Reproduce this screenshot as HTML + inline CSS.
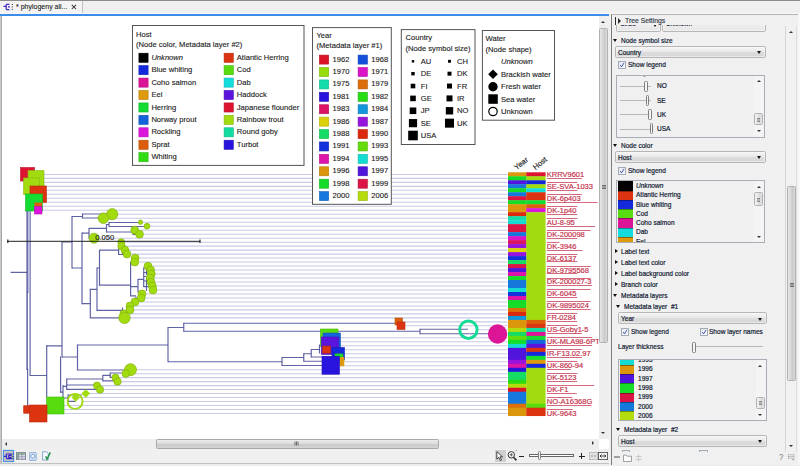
<!DOCTYPE html>
<html><head><meta charset="utf-8"><title>phylogeny alignment</title>
<style>
html,body{margin:0;padding:0;background:#f0f0f0;}
body{width:800px;height:466px;overflow:hidden;position:relative;font-family:"Liberation Sans",Arial,sans-serif;}
.a{position:absolute;}
#cv{position:absolute;left:0;top:0;width:800px;height:466px;}
#cv text{font-family:"Liberation Sans",Arial,sans-serif;}
.t{position:absolute;white-space:nowrap;font-size:7.4px;line-height:9px;color:#0f1830;-webkit-text-stroke:.2px #0f1830;transform:scaleX(.885);transform-origin:0 50%;}
.dd{position:absolute;height:10.3px;border:1px solid #b6b6b6;border-radius:1.8px;background:linear-gradient(#f5f5f5,#e8e8e8 48%,#dddddd 52%,#d5d5d5);box-shadow:0 0 0 .5px #fafafa inset;}
.dd i{position:absolute;right:3.4px;top:4.4px;width:0;height:0;border-left:2.6px solid transparent;border-right:2.6px solid transparent;border-top:3px solid #161616;}
.cb{position:absolute;width:6.2px;height:6.2px;border:.9px solid #a2abb8;background:linear-gradient(135deg,#e3e6ea,#fcfcfd);}
.cb svg{position:absolute;left:0;top:0;}
.tri-d{position:absolute;width:0;height:0;border-left:2.8px solid transparent;border-right:2.8px solid transparent;border-top:3.2px solid #111;}
.tri-r{position:absolute;width:0;height:0;border-top:2.8px solid transparent;border-bottom:2.8px solid transparent;border-left:3.2px solid #111;}
.lb{position:absolute;border:1px solid #a9aeb6;background:#f0f0f0;overflow:hidden;}
.sw{position:absolute;height:9.3px;border-top:.6px solid rgba(0,0,0,.35);box-sizing:border-box;}
.sbv{position:absolute;width:10px;background:#f0f0f0;}
.thumbv{position:absolute;left:.5px;width:9px;border:.8px solid #b2b2b2;border-radius:1.5px;box-sizing:border-box;background:linear-gradient(90deg,#e6e6e6,#d6d6d6 45%,#c8c8c8 60%,#dadada);}
.thumbh{position:absolute;border:.8px solid #a8a8a8;border-radius:1.5px;box-sizing:border-box;background:linear-gradient(#ececec,#dcdcdc 45%,#cacaca 58%,#d4d4d4);}
.au{position:absolute;width:0;height:0;border-left:2.4px solid transparent;border-right:2.4px solid transparent;border-bottom:2.8px solid #333;}
.ad{position:absolute;width:0;height:0;border-left:2.4px solid transparent;border-right:2.4px solid transparent;border-top:2.8px solid #333;}
.al{position:absolute;width:0;height:0;border-top:2.4px solid transparent;border-bottom:2.4px solid transparent;border-right:2.8px solid #333;}
.ar{position:absolute;width:0;height:0;border-top:2.4px solid transparent;border-bottom:2.4px solid transparent;border-left:2.8px solid #333;}
.grip{position:absolute;width:4px;height:0;border-top:.7px solid #6e6e6e;box-shadow:0 1.5px 0 #6e6e6e,0 3px 0 #6e6e6e;}
.trk{position:absolute;height:0;border-top:.8px solid #b9b9b9;}
.knob{position:absolute;width:1.5px;height:9px;border:.8px solid #7d7d7d;border-radius:1.4px;background:#f6f6f6;}
</style></head>
<body>
<!-- top frame -->
<div class="a" style="left:0;top:0;width:800px;height:1.3px;background:#8c8c8c"></div>
<div class="a" style="left:0;top:1.3px;width:800px;height:13px;background:#f0f0f0"></div>
<!-- tab -->
<div class="a" style="left:0;top:1.3px;width:83.2px;height:12.2px;background:#f4f4f4;border-right:1px solid #c2c2c2;box-sizing:border-box"></div><div class="a" style="left:0;top:12.6px;width:800px;height:1.6px;background:#f8f8f8"></div>
<svg class="a" style="left:3px;top:3px" width="11" height="9" viewBox="0 0 11 9">
 <path d="M0.5 3.3H3.2 M3.2 1.4V6.6 M3.2 1.4H6.4 M3.2 6.6H6.4 M5 3.9H7" fill="none" stroke="#3a28c8" stroke-width="1.25"/>
 <path d="M9.3 1V2 M9.3 3.4V4.4 M9.3 5.8V6.8" stroke="#222" stroke-width="1"/>
</svg>
<div class="t" style="left:15.8px;top:2.2px;color:#111;-webkit-text-stroke:.08px #111;font-size:7.5px;transform:scaleX(.935)">* phylogeny ali...</div>
<svg class="a" style="left:71.4px;top:4.2px" width="6" height="6" viewBox="0 0 6 6"><path d="M.8 .8L5 5M5 .8L.8 5" stroke="#383838" stroke-width="1.05" fill="none"/></svg>
<!-- blue line -->
<div class="a" style="left:0;top:14.3px;width:608.8px;height:2.1px;background:#3b8ee8"></div>
<!-- canvas frame -->
<div class="a" style="left:0;top:16.4px;width:1.3px;height:448px;background:#cacaca"></div><div class="a" style="left:1.3px;top:16.4px;width:.4px;height:448px;background:#a8a8a8"></div>
<div class="a" style="left:1.6px;top:16.4px;width:597px;height:422.2px;background:#fff"></div>

<svg id="cv" viewBox="0 0 800 466" width="800" height="466">
<defs><clipPath id="cc"><rect x="2" y="16.4" width="596.6" height="422.2"/></clipPath></defs>
<g clip-path="url(#cc)">
<line x1="44" y1="174.40" x2="507.5" y2="174.40" stroke="#c8cae6" stroke-width="1.05"/>
<line x1="44" y1="178.39" x2="507.5" y2="178.39" stroke="#c8cae6" stroke-width="1.05"/>
<line x1="44" y1="182.37" x2="507.5" y2="182.37" stroke="#c8cae6" stroke-width="1.05"/>
<line x1="44" y1="186.36" x2="507.5" y2="186.36" stroke="#c8cae6" stroke-width="1.05"/>
<line x1="44" y1="190.34" x2="507.5" y2="190.34" stroke="#c8cae6" stroke-width="1.05"/>
<line x1="46.5" y1="194.33" x2="507.5" y2="194.33" stroke="#c8cae6" stroke-width="1.05"/>
<line x1="46.5" y1="198.31" x2="507.5" y2="198.31" stroke="#c8cae6" stroke-width="1.05"/>
<line x1="43" y1="202.30" x2="507.5" y2="202.30" stroke="#c8cae6" stroke-width="1.05"/>
<line x1="42" y1="206.28" x2="507.5" y2="206.28" stroke="#c8cae6" stroke-width="1.05"/>
<line x1="42" y1="210.27" x2="507.5" y2="210.27" stroke="#c8cae6" stroke-width="1.05"/>
<line x1="116.8" y1="214.25" x2="507.5" y2="214.25" stroke="#c8cae6" stroke-width="1.05"/>
<line x1="107.7" y1="218.24" x2="507.5" y2="218.24" stroke="#c8cae6" stroke-width="1.05"/>
<line x1="141.7" y1="222.22" x2="507.5" y2="222.22" stroke="#c8cae6" stroke-width="1.05"/>
<line x1="148.9" y1="226.21" x2="507.5" y2="226.21" stroke="#c8cae6" stroke-width="1.05"/>
<line x1="137.6" y1="230.19" x2="507.5" y2="230.19" stroke="#c8cae6" stroke-width="1.05"/>
<line x1="142.4" y1="234.18" x2="507.5" y2="234.18" stroke="#c8cae6" stroke-width="1.05"/>
<line x1="98.0" y1="238.16" x2="507.5" y2="238.16" stroke="#c8cae6" stroke-width="1.05"/>
<line x1="123.60000000000001" y1="242.15" x2="507.5" y2="242.15" stroke="#c8cae6" stroke-width="1.05"/>
<line x1="124.2" y1="246.13" x2="507.5" y2="246.13" stroke="#c8cae6" stroke-width="1.05"/>
<line x1="127.9" y1="250.12" x2="507.5" y2="250.12" stroke="#c8cae6" stroke-width="1.05"/>
<line x1="129.9" y1="254.10" x2="507.5" y2="254.10" stroke="#c8cae6" stroke-width="1.05"/>
<line x1="138.1" y1="258.09" x2="507.5" y2="258.09" stroke="#c8cae6" stroke-width="1.05"/>
<line x1="137.6" y1="262.07" x2="507.5" y2="262.07" stroke="#c8cae6" stroke-width="1.05"/>
<line x1="150.9" y1="266.06" x2="507.5" y2="266.06" stroke="#c8cae6" stroke-width="1.05"/>
<line x1="153.5" y1="270.04" x2="507.5" y2="270.04" stroke="#c8cae6" stroke-width="1.05"/>
<line x1="154.20000000000002" y1="274.02" x2="507.5" y2="274.02" stroke="#c8cae6" stroke-width="1.05"/>
<line x1="153.1" y1="278.01" x2="507.5" y2="278.01" stroke="#c8cae6" stroke-width="1.05"/>
<line x1="153.9" y1="282.00" x2="507.5" y2="282.00" stroke="#c8cae6" stroke-width="1.05"/>
<line x1="155.3" y1="285.98" x2="507.5" y2="285.98" stroke="#c8cae6" stroke-width="1.05"/>
<line x1="155.9" y1="289.97" x2="507.5" y2="289.97" stroke="#c8cae6" stroke-width="1.05"/>
<line x1="144.9" y1="293.95" x2="507.5" y2="293.95" stroke="#c8cae6" stroke-width="1.05"/>
<line x1="144.1" y1="297.94" x2="507.5" y2="297.94" stroke="#c8cae6" stroke-width="1.05"/>
<line x1="137.9" y1="301.92" x2="507.5" y2="301.92" stroke="#c8cae6" stroke-width="1.05"/>
<line x1="132.9" y1="305.90" x2="507.5" y2="305.90" stroke="#c8cae6" stroke-width="1.05"/>
<line x1="132.9" y1="309.89" x2="507.5" y2="309.89" stroke="#c8cae6" stroke-width="1.05"/>
<line x1="126.7" y1="313.88" x2="507.5" y2="313.88" stroke="#c8cae6" stroke-width="1.05"/>
<line x1="129.2" y1="317.86" x2="507.5" y2="317.86" stroke="#c8cae6" stroke-width="1.05"/>
<line x1="402" y1="321.85" x2="507.5" y2="321.85" stroke="#c8cae6" stroke-width="1.05"/>
<line x1="405" y1="325.83" x2="507.5" y2="325.83" stroke="#c8cae6" stroke-width="1.05"/>
<line x1="478" y1="329.81" x2="507.5" y2="329.81" stroke="#c8cae6" stroke-width="1.05"/>
<line x1="338" y1="337.78" x2="507.5" y2="337.78" stroke="#c8cae6" stroke-width="1.05"/>
<line x1="340.5" y1="341.77" x2="507.5" y2="341.77" stroke="#c8cae6" stroke-width="1.05"/>
<line x1="340" y1="345.75" x2="507.5" y2="345.75" stroke="#c8cae6" stroke-width="1.05"/>
<line x1="344" y1="349.74" x2="507.5" y2="349.74" stroke="#c8cae6" stroke-width="1.05"/>
<line x1="344.5" y1="353.73" x2="507.5" y2="353.73" stroke="#c8cae6" stroke-width="1.05"/>
<line x1="344.5" y1="357.71" x2="507.5" y2="357.71" stroke="#c8cae6" stroke-width="1.05"/>
<line x1="344.5" y1="361.69" x2="507.5" y2="361.69" stroke="#c8cae6" stroke-width="1.05"/>
<line x1="339.5" y1="365.68" x2="507.5" y2="365.68" stroke="#c8cae6" stroke-width="1.05"/>
<line x1="135.5" y1="369.66" x2="507.5" y2="369.66" stroke="#c8cae6" stroke-width="1.05"/>
<line x1="128.6" y1="373.65" x2="507.5" y2="373.65" stroke="#c8cae6" stroke-width="1.05"/>
<line x1="118.1" y1="377.63" x2="507.5" y2="377.63" stroke="#c8cae6" stroke-width="1.05"/>
<line x1="120.2" y1="381.62" x2="507.5" y2="381.62" stroke="#c8cae6" stroke-width="1.05"/>
<line x1="99.6" y1="385.61" x2="507.5" y2="385.61" stroke="#c8cae6" stroke-width="1.05"/>
<line x1="102.7" y1="389.59" x2="507.5" y2="389.59" stroke="#c8cae6" stroke-width="1.05"/>
<line x1="89" y1="393.57" x2="507.5" y2="393.57" stroke="#c8cae6" stroke-width="1.05"/>
<line x1="78" y1="397.56" x2="507.5" y2="397.56" stroke="#c8cae6" stroke-width="1.05"/>
<line x1="82" y1="401.54" x2="507.5" y2="401.54" stroke="#c8cae6" stroke-width="1.05"/>
<line x1="64" y1="405.53" x2="507.5" y2="405.53" stroke="#c8cae6" stroke-width="1.05"/>
<line x1="47" y1="409.51" x2="507.5" y2="409.51" stroke="#c8cae6" stroke-width="1.05"/>
<line x1="47" y1="413.50" x2="507.5" y2="413.50" stroke="#c8cae6" stroke-width="1.05"/>
<line x1="27.6" y1="368.5" x2="27.6" y2="406.5" stroke="#4b4e97" stroke-width="1.2" stroke-opacity=".88"/>
<line x1="30.1" y1="210.5" x2="30.1" y2="376.0" stroke="#4b4e97" stroke-width="1.2" stroke-opacity=".88"/>
<line x1="10.6" y1="272.3" x2="27" y2="272.3" stroke="#4b4e97" stroke-width="1.2" stroke-opacity=".88"/>
<line x1="30" y1="375.5" x2="46.7" y2="375.5" stroke="#4b4e97" stroke-width="1.2" stroke-opacity=".88"/>
<line x1="27.2" y1="291.8" x2="29" y2="291.8" stroke="#4b4e97" stroke-width="1.2" stroke-opacity=".88"/>
<line x1="46.7" y1="345.3" x2="46.7" y2="398.0" stroke="#4b4e97" stroke-width="1.2" stroke-opacity=".88"/>
<line x1="46.7" y1="345.8" x2="62" y2="345.8" stroke="#4b4e97" stroke-width="1.2" stroke-opacity=".88"/>
<line x1="62" y1="241.5" x2="62" y2="357.5" stroke="#4b4e97" stroke-width="1.2" stroke-opacity=".88"/>
<line x1="62" y1="242" x2="72" y2="242" stroke="#4b4e97" stroke-width="1.2" stroke-opacity=".88"/>
<line x1="72" y1="216.0" x2="72" y2="268.5" stroke="#4b4e97" stroke-width="1.2" stroke-opacity=".88"/>
<line x1="72" y1="216.5" x2="82.5" y2="216.5" stroke="#4b4e97" stroke-width="1.2" stroke-opacity=".88"/>
<line x1="82.5" y1="213.5" x2="82.5" y2="218.5" stroke="#4b4e97" stroke-width="1.2" stroke-opacity=".88"/>
<line x1="82.5" y1="214" x2="107" y2="214" stroke="#4b4e97" stroke-width="1.2" stroke-opacity=".88"/>
<line x1="82.5" y1="218" x2="99" y2="218" stroke="#4b4e97" stroke-width="1.2" stroke-opacity=".88"/>
<line x1="72" y1="268" x2="82" y2="268" stroke="#4b4e97" stroke-width="1.2" stroke-opacity=".88"/>
<line x1="82" y1="232.5" x2="82" y2="304.2" stroke="#4b4e97" stroke-width="1.2" stroke-opacity=".88"/>
<line x1="82" y1="233.1" x2="89" y2="233.1" stroke="#4b4e97" stroke-width="1.2" stroke-opacity=".88"/>
<line x1="89" y1="227.9" x2="89" y2="238.5" stroke="#4b4e97" stroke-width="1.2" stroke-opacity=".88"/>
<line x1="89" y1="238.3" x2="93" y2="238.3" stroke="#4b4e97" stroke-width="1.2" stroke-opacity=".88"/>
<line x1="89" y1="228.4" x2="106.5" y2="228.4" stroke="#4b4e97" stroke-width="1.2" stroke-opacity=".88"/>
<line x1="106.5" y1="224.0" x2="106.5" y2="232.5" stroke="#4b4e97" stroke-width="1.2" stroke-opacity=".88"/>
<line x1="106.5" y1="224.5" x2="109" y2="224.5" stroke="#4b4e97" stroke-width="1.2" stroke-opacity=".88"/>
<line x1="109" y1="222.0" x2="109" y2="227.0" stroke="#4b4e97" stroke-width="1.2" stroke-opacity=".88"/>
<line x1="109" y1="222.5" x2="139" y2="222.5" stroke="#4b4e97" stroke-width="1.2" stroke-opacity=".88"/>
<line x1="109" y1="226.5" x2="145" y2="226.5" stroke="#4b4e97" stroke-width="1.2" stroke-opacity=".88"/>
<line x1="106.5" y1="232" x2="133" y2="232" stroke="#4b4e97" stroke-width="1.2" stroke-opacity=".88"/>
<line x1="133" y1="230.0" x2="133" y2="235.0" stroke="#4b4e97" stroke-width="1.2" stroke-opacity=".88"/>
<line x1="133" y1="230.5" x2="135" y2="230.5" stroke="#4b4e97" stroke-width="1.2" stroke-opacity=".88"/>
<line x1="133" y1="234.5" x2="138" y2="234.5" stroke="#4b4e97" stroke-width="1.2" stroke-opacity=".88"/>
<line x1="82" y1="303.7" x2="90.3" y2="303.7" stroke="#4b4e97" stroke-width="1.2" stroke-opacity=".88"/>
<line x1="90.3" y1="288.8" x2="90.3" y2="318.3" stroke="#4b4e97" stroke-width="1.2" stroke-opacity=".88"/>
<line x1="90.3" y1="317.8" x2="122" y2="317.8" stroke="#4b4e97" stroke-width="1.2" stroke-opacity=".88"/>
<line x1="90.3" y1="289.3" x2="97" y2="289.3" stroke="#4b4e97" stroke-width="1.2" stroke-opacity=".88"/>
<line x1="97" y1="267.5" x2="97" y2="310.9" stroke="#4b4e97" stroke-width="1.2" stroke-opacity=".88"/>
<line x1="97" y1="310.4" x2="122.5" y2="310.4" stroke="#4b4e97" stroke-width="1.2" stroke-opacity=".88"/>
<line x1="122.5" y1="307.5" x2="122.5" y2="313.5" stroke="#4b4e97" stroke-width="1.2" stroke-opacity=".88"/>
<line x1="97" y1="268" x2="99.5" y2="268" stroke="#4b4e97" stroke-width="1.2" stroke-opacity=".88"/>
<line x1="99.5" y1="249.7" x2="99.5" y2="285.7" stroke="#4b4e97" stroke-width="1.2" stroke-opacity=".88"/>
<line x1="99.5" y1="250.2" x2="118.6" y2="250.2" stroke="#4b4e97" stroke-width="1.2" stroke-opacity=".88"/>
<line x1="118.6" y1="244.0" x2="118.6" y2="255.0" stroke="#4b4e97" stroke-width="1.2" stroke-opacity=".88"/>
<line x1="118.6" y1="244.5" x2="121" y2="244.5" stroke="#4b4e97" stroke-width="1.2" stroke-opacity=".88"/>
<line x1="118.6" y1="254.5" x2="126" y2="254.5" stroke="#4b4e97" stroke-width="1.2" stroke-opacity=".88"/>
<line x1="120" y1="242.0" x2="120" y2="247.0" stroke="#4b4e97" stroke-width="1.2" stroke-opacity=".88"/>
<line x1="122.5" y1="250.0" x2="122.5" y2="255.0" stroke="#4b4e97" stroke-width="1.2" stroke-opacity=".88"/>
<line x1="99.5" y1="285.2" x2="130.6" y2="285.2" stroke="#4b4e97" stroke-width="1.2" stroke-opacity=".88"/>
<line x1="130.6" y1="261.5" x2="130.6" y2="296.3" stroke="#4b4e97" stroke-width="1.2" stroke-opacity=".88"/>
<line x1="130.6" y1="262" x2="134" y2="262" stroke="#4b4e97" stroke-width="1.2" stroke-opacity=".88"/>
<line x1="133" y1="258.0" x2="133" y2="263.0" stroke="#4b4e97" stroke-width="1.2" stroke-opacity=".88"/>
<line x1="130.6" y1="286.6" x2="138" y2="286.6" stroke="#4b4e97" stroke-width="1.2" stroke-opacity=".88"/>
<line x1="138" y1="278.9" x2="138" y2="292.5" stroke="#4b4e97" stroke-width="1.2" stroke-opacity=".88"/>
<line x1="138" y1="279.4" x2="143.7" y2="279.4" stroke="#4b4e97" stroke-width="1.2" stroke-opacity=".88"/>
<line x1="143.7" y1="267.5" x2="143.7" y2="287.1" stroke="#4b4e97" stroke-width="1.2" stroke-opacity=".88"/>
<line x1="138" y1="292" x2="141" y2="292" stroke="#4b4e97" stroke-width="1.2" stroke-opacity=".88"/>
<line x1="130.6" y1="295.8" x2="136" y2="295.8" stroke="#4b4e97" stroke-width="1.2" stroke-opacity=".88"/>
<line x1="136" y1="296.5" x2="136" y2="302.5" stroke="#4b4e97" stroke-width="1.2" stroke-opacity=".88"/>
<line x1="143.7" y1="268" x2="146" y2="268" stroke="#4b4e97" stroke-width="1.2" stroke-opacity=".88"/>
<line x1="143.7" y1="272.5" x2="148" y2="272.5" stroke="#4b4e97" stroke-width="1.2" stroke-opacity=".88"/>
<line x1="143.7" y1="276.5" x2="148" y2="276.5" stroke="#4b4e97" stroke-width="1.2" stroke-opacity=".88"/>
<line x1="143.7" y1="281" x2="148" y2="281" stroke="#4b4e97" stroke-width="1.2" stroke-opacity=".88"/>
<line x1="143.7" y1="286.6" x2="149" y2="286.6" stroke="#4b4e97" stroke-width="1.2" stroke-opacity=".88"/>
<line x1="146.5" y1="266.0" x2="146.5" y2="275.0" stroke="#4b4e97" stroke-width="1.2" stroke-opacity=".88"/>
<line x1="146.5" y1="278.0" x2="146.5" y2="291.0" stroke="#4b4e97" stroke-width="1.2" stroke-opacity=".88"/>
<line x1="127" y1="305.5" x2="127" y2="310.9" stroke="#4b4e97" stroke-width="1.2" stroke-opacity=".88"/>
<line x1="62" y1="357" x2="77.5" y2="357" stroke="#4b4e97" stroke-width="1.2" stroke-opacity=".88"/>
<line x1="77.5" y1="344.5" x2="77.5" y2="370.5" stroke="#4b4e97" stroke-width="1.2" stroke-opacity=".88"/>
<line x1="77.5" y1="345" x2="168" y2="345" stroke="#4b4e97" stroke-width="1.2" stroke-opacity=".88"/>
<line x1="77.5" y1="370" x2="125" y2="370" stroke="#4b4e97" stroke-width="1.2" stroke-opacity=".88"/>
<line x1="168" y1="327.0" x2="168" y2="362.25" stroke="#4b4e97" stroke-width="1.2" stroke-opacity=".88"/>
<line x1="168" y1="327.5" x2="183.75" y2="327.5" stroke="#4b4e97" stroke-width="1.2" stroke-opacity=".88"/>
<line x1="168" y1="361.75" x2="282" y2="361.75" stroke="#4b4e97" stroke-width="1.2" stroke-opacity=".88"/>
<line x1="183.75" y1="322.75" x2="183.75" y2="331.75" stroke="#4b4e97" stroke-width="1.2" stroke-opacity=".88"/>
<line x1="183.75" y1="323.25" x2="395" y2="323.25" stroke="#4b4e97" stroke-width="1.2" stroke-opacity=".88"/>
<line x1="183.75" y1="331.25" x2="420" y2="331.25" stroke="#4b4e97" stroke-width="1.2" stroke-opacity=".88"/>
<line x1="60.6" y1="356.5" x2="60.6" y2="392.7" stroke="#4b4e97" stroke-width="1.2" stroke-opacity=".88"/>
<line x1="60.6" y1="392.2" x2="63" y2="392.2" stroke="#4b4e97" stroke-width="1.2" stroke-opacity=".88"/>
<line x1="63" y1="385.2" x2="63" y2="397.8" stroke="#4b4e97" stroke-width="1.2" stroke-opacity=".88"/>
<line x1="63" y1="386.4" x2="66.7" y2="386.4" stroke="#4b4e97" stroke-width="1.2" stroke-opacity=".88"/>
<line x1="66.7" y1="378.5" x2="66.7" y2="389.9" stroke="#4b4e97" stroke-width="1.2" stroke-opacity=".88"/>
<line x1="66.7" y1="379" x2="102.8" y2="379" stroke="#4b4e97" stroke-width="1.2" stroke-opacity=".88"/>
<line x1="66.7" y1="385" x2="94" y2="385" stroke="#4b4e97" stroke-width="1.2" stroke-opacity=".88"/>
<line x1="66.7" y1="389.4" x2="97" y2="389.4" stroke="#4b4e97" stroke-width="1.2" stroke-opacity=".88"/>
<line x1="102.8" y1="374.9" x2="102.8" y2="381.3" stroke="#4b4e97" stroke-width="1.2" stroke-opacity=".88"/>
<line x1="102.8" y1="375.4" x2="110.2" y2="375.4" stroke="#4b4e97" stroke-width="1.2" stroke-opacity=".88"/>
<line x1="102.8" y1="380.8" x2="114" y2="380.8" stroke="#4b4e97" stroke-width="1.2" stroke-opacity=".88"/>
<line x1="110.2" y1="372.5" x2="110.2" y2="377.9" stroke="#4b4e97" stroke-width="1.2" stroke-opacity=".88"/>
<line x1="110.2" y1="373" x2="122" y2="373" stroke="#4b4e97" stroke-width="1.2" stroke-opacity=".88"/>
<line x1="110.2" y1="377.4" x2="113" y2="377.4" stroke="#4b4e97" stroke-width="1.2" stroke-opacity=".88"/>
<line x1="63" y1="398" x2="68" y2="398" stroke="#4b4e97" stroke-width="1.2" stroke-opacity=".88"/>
<line x1="68" y1="394.5" x2="68" y2="401.9" stroke="#4b4e97" stroke-width="1.2" stroke-opacity=".88"/>
<line x1="68" y1="395" x2="82" y2="395" stroke="#4b4e97" stroke-width="1.2" stroke-opacity=".88"/>
<line x1="68" y1="401.4" x2="75.7" y2="401.4" stroke="#4b4e97" stroke-width="1.2" stroke-opacity=".88"/>
<line x1="282" y1="357.0" x2="282" y2="366.0" stroke="#4b4e97" stroke-width="1.2" stroke-opacity=".88"/>
<line x1="282" y1="357.5" x2="303.75" y2="357.5" stroke="#4b4e97" stroke-width="1.2" stroke-opacity=".88"/>
<line x1="282" y1="365.5" x2="322" y2="365.5" stroke="#4b4e97" stroke-width="1.2" stroke-opacity=".88"/>
<line x1="303.75" y1="353.25" x2="303.75" y2="361.75" stroke="#4b4e97" stroke-width="1.2" stroke-opacity=".88"/>
<line x1="303.75" y1="353.75" x2="311.25" y2="353.75" stroke="#4b4e97" stroke-width="1.2" stroke-opacity=".88"/>
<line x1="303.75" y1="361.25" x2="322" y2="361.25" stroke="#4b4e97" stroke-width="1.2" stroke-opacity=".88"/>
<line x1="311.25" y1="349.0" x2="311.25" y2="357.5" stroke="#4b4e97" stroke-width="1.2" stroke-opacity=".88"/>
<line x1="311.25" y1="349.5" x2="320" y2="349.5" stroke="#4b4e97" stroke-width="1.2" stroke-opacity=".88"/>
<line x1="311.25" y1="357" x2="332" y2="357" stroke="#4b4e97" stroke-width="1.2" stroke-opacity=".88"/>
<line x1="319.5" y1="344.5" x2="319.5" y2="353.5" stroke="#4b4e97" stroke-width="1.2" stroke-opacity=".88"/>
<line x1="420" y1="328.75" x2="420" y2="334.25" stroke="#4b4e97" stroke-width="1.2" stroke-opacity=".88"/>
<line x1="420" y1="329.25" x2="468" y2="329.25" stroke="#4b4e97" stroke-width="1.2" stroke-opacity=".88"/>
<line x1="420" y1="333.75" x2="488" y2="333.75" stroke="#4b4e97" stroke-width="1.2" stroke-opacity=".88"/>
<line x1="28.6" y1="210.5" x2="28.6" y2="292" stroke="#b9bbdf" stroke-width="1.6"/>
<line x1="27.1" y1="210.5" x2="27.1" y2="370" stroke="#3f4190" stroke-width="1.25"/>
<rect x="20.50" y="167.50" width="14" height="13.5" fill="#dc1432" stroke="#b81028" stroke-width="0.6"/>
<rect x="28.00" y="170.50" width="16" height="16.5" fill="#a2dc10" stroke="#86b80c" stroke-width="0.6"/>
<rect x="23.60" y="178.00" width="16" height="16.5" fill="#a2dc10" stroke="#86b80c" stroke-width="0.6"/>
<rect x="30.00" y="186.00" width="16.5" height="16.5" fill="#dc3410" stroke="#b82a0c" stroke-width="0.6"/>
<rect x="25.50" y="194.00" width="17" height="17" fill="#14dc32" stroke="#10b82a" stroke-width="0.6"/>
<rect x="34.50" y="202.50" width="7.5" height="4" fill="#dc5e0c"/>
<rect x="34.50" y="206.50" width="7.5" height="7.5" fill="#dc14dc" stroke="#b810b8" stroke-width="0.6"/>
<circle cx="112.2" cy="214.2" r="5.6" fill="#a2dc10" stroke="#84b20c" stroke-width="0.7"/>
<circle cx="103.4" cy="218.2" r="5.3" fill="#a2dc10" stroke="#84b20c" stroke-width="0.7"/>
<circle cx="140.5" cy="222.2" r="2.2" fill="#a2dc10" stroke="#84b20c" stroke-width="0.7"/>
<circle cx="147" cy="226.2" r="2.9" fill="#a2dc10" stroke="#84b20c" stroke-width="0.7"/>
<circle cx="134.7" cy="230.2" r="3.9" fill="#a2dc10" stroke="#84b20c" stroke-width="0.7"/>
<circle cx="139.5" cy="234.2" r="3.9" fill="#a2dc10" stroke="#84b20c" stroke-width="0.7"/>
<circle cx="94" cy="238.2" r="5.0" fill="#a2dc10" stroke="#84b20c" stroke-width="0.7"/>
<circle cx="121.2" cy="242.1" r="3.4" fill="#a2dc10" stroke="#84b20c" stroke-width="0.7"/>
<circle cx="121.5" cy="246.1" r="3.7" fill="#a2dc10" stroke="#84b20c" stroke-width="0.7"/>
<circle cx="125" cy="250.1" r="3.9" fill="#a2dc10" stroke="#84b20c" stroke-width="0.7"/>
<circle cx="127" cy="254.1" r="3.9" fill="#a2dc10" stroke="#84b20c" stroke-width="0.7"/>
<circle cx="135.2" cy="258.1" r="3.9" fill="#a2dc10" stroke="#84b20c" stroke-width="0.7"/>
<circle cx="134.7" cy="262.1" r="3.9" fill="#a2dc10" stroke="#84b20c" stroke-width="0.7"/>
<circle cx="148" cy="266.1" r="3.9" fill="#a2dc10" stroke="#84b20c" stroke-width="0.7"/>
<circle cx="150.6" cy="270.0" r="3.9" fill="#a2dc10" stroke="#84b20c" stroke-width="0.7"/>
<circle cx="151.3" cy="274.0" r="3.9" fill="#a2dc10" stroke="#84b20c" stroke-width="0.7"/>
<circle cx="150.2" cy="278.0" r="3.9" fill="#a2dc10" stroke="#84b20c" stroke-width="0.7"/>
<circle cx="151" cy="282.0" r="3.9" fill="#a2dc10" stroke="#84b20c" stroke-width="0.7"/>
<circle cx="152.4" cy="286.0" r="3.9" fill="#a2dc10" stroke="#84b20c" stroke-width="0.7"/>
<circle cx="153" cy="290.0" r="3.9" fill="#a2dc10" stroke="#84b20c" stroke-width="0.7"/>
<circle cx="142" cy="293.9" r="3.9" fill="#a2dc10" stroke="#84b20c" stroke-width="0.7"/>
<circle cx="141.2" cy="297.9" r="3.9" fill="#a2dc10" stroke="#84b20c" stroke-width="0.7"/>
<circle cx="135" cy="301.9" r="3.9" fill="#a2dc10" stroke="#84b20c" stroke-width="0.7"/>
<circle cx="130" cy="305.9" r="3.9" fill="#a2dc10" stroke="#84b20c" stroke-width="0.7"/>
<circle cx="130" cy="309.9" r="3.9" fill="#a2dc10" stroke="#84b20c" stroke-width="0.7"/>
<circle cx="123.8" cy="313.9" r="3.9" fill="#a2dc10" stroke="#84b20c" stroke-width="0.7"/>
<circle cx="124.5" cy="317.9" r="5.7" fill="#a2dc10" stroke="#84b20c" stroke-width="0.7"/>
<circle cx="130.5" cy="369.7" r="6.0" fill="#a2dc10" stroke="#84b20c" stroke-width="0.7"/>
<circle cx="125.8" cy="373.6" r="3.8" fill="#a2dc10" stroke="#84b20c" stroke-width="0.7"/>
<circle cx="115.5" cy="377.6" r="3.6" fill="#a2dc10" stroke="#84b20c" stroke-width="0.7"/>
<circle cx="117.5" cy="381.6" r="3.7" fill="#a2dc10" stroke="#84b20c" stroke-width="0.7"/>
<circle cx="97" cy="385.6" r="3.6" fill="#a2dc10" stroke="#84b20c" stroke-width="0.7"/>
<circle cx="100" cy="389.6" r="3.7" fill="#a2dc10" stroke="#84b20c" stroke-width="0.7"/>
<polygon points="81.5,393.5 85.8,389.2 90.1,393.5 85.8,397.8" fill="#a2dc10"/>
<polygon points="71.5,397.5 75.7,393.3 79.9,397.5 75.7,401.7" fill="#a2dc10"/>
<circle cx="75.1" cy="401.4" r="7.5" fill="none" stroke="#a2dc10" stroke-width="1.9"/>
<rect x="46.50" y="397.00" width="17.5" height="17" fill="#58dc10" stroke="#48b80c" stroke-width="0.6"/>
<rect x="23.70" y="405.75" width="5.8" height="7.5" fill="#dc3410" stroke="#b82a0c" stroke-width="0.6"/>
<rect x="29.50" y="405.00" width="17.5" height="17" fill="#dc3410" stroke="#b82a0c" stroke-width="0.6"/>
<line x1="7.5" y1="241.3" x2="200" y2="241.3" stroke="#222" stroke-width="1"/>
<line x1="7.8" y1="239.6" x2="7.8" y2="243" stroke="#222" stroke-width="1.2"/>
<line x1="200" y1="239.6" x2="200" y2="243" stroke="#222" stroke-width="1.2"/>
<text x="95.2" y="239.6" font-size="7.6" fill="#1c1c1c" stroke="#1c1c1c" stroke-width=".15">0.050</text>
<rect x="320.50" y="329.00" width="17.5" height="17.5" fill="#58dc10" stroke="#48b80c" stroke-width="0.6"/>
<rect x="323.00" y="333.00" width="17.5" height="17.5" fill="#1464dc" stroke="#1054b8" stroke-width="0.6"/>
<rect x="321.25" y="337.00" width="17.5" height="17.5" fill="#5a14dc" stroke="#4a10b8" stroke-width="0.6"/>
<rect x="322.50" y="346.10" width="8" height="7" fill="#dc3410" stroke="#b82a0c" stroke-width="0.6"/>
<rect x="332.00" y="347.50" width="12.5" height="12.5" fill="#1428dc" stroke="#1020b8" stroke-width="0.6"/>
<rect x="335.00" y="353.90" width="8" height="7" fill="#14dc32" stroke="#32b810" stroke-width="0.6"/>
<rect x="339.50" y="356.95" width="4.8" height="9.3" fill="#dc9a0c"/>
<rect x="322.00" y="356.25" width="17.5" height="18" fill="#2814dc" stroke="#2010b8" stroke-width="0.6"/>
<rect x="395.00" y="318.00" width="7.5" height="7" fill="#dc5e0c" stroke="#b84e0a" stroke-width="0.6"/>
<rect x="397.00" y="322.00" width="8" height="7.5" fill="#dc3410" stroke="#b82a0c" stroke-width="0.6"/>
<circle cx="468.4" cy="329.7" r="8.7" fill="none" stroke="#14dc96" stroke-width="3"/>
<circle cx="497.6" cy="334" r="9.7" fill="#dc1496"/>
<rect x="508" y="172.30" width="18.6" height="4.34" fill="#dc960c"/>
<rect x="508" y="176.29" width="18.6" height="4.34" fill="#14dc28"/>
<rect x="508" y="180.28" width="18.6" height="4.34" fill="#5014dc"/>
<rect x="508" y="184.27" width="18.6" height="4.34" fill="#1478dc"/>
<rect x="508" y="188.26" width="18.6" height="4.34" fill="#14dc28"/>
<rect x="508" y="192.25" width="18.6" height="4.34" fill="#1478dc"/>
<rect x="508" y="196.24" width="18.6" height="4.34" fill="#dc1446"/>
<rect x="508" y="200.23" width="18.6" height="4.34" fill="#14dc28"/>
<rect x="508" y="204.22" width="18.6" height="8.33" fill="#dc960c"/>
<rect x="508" y="212.20" width="18.6" height="4.34" fill="#dc280c"/>
<rect x="508" y="216.19" width="18.6" height="4.34" fill="#14dcaa"/>
<rect x="508" y="220.18" width="18.6" height="4.34" fill="#14dcd2"/>
<rect x="508" y="224.17" width="18.6" height="8.33" fill="#dc1446"/>
<rect x="508" y="232.15" width="18.6" height="4.34" fill="#1478dc"/>
<rect x="508" y="236.14" width="18.6" height="4.34" fill="#dc14c8"/>
<rect x="508" y="240.13" width="18.6" height="4.34" fill="#dc1464"/>
<rect x="508" y="244.12" width="18.6" height="4.34" fill="#9614dc"/>
<rect x="508" y="248.11" width="18.6" height="4.34" fill="#dcd20c"/>
<rect x="508" y="252.10" width="18.6" height="4.34" fill="#9614dc"/>
<rect x="508" y="256.09" width="18.6" height="4.34" fill="#1432dc"/>
<rect x="508" y="260.08" width="18.6" height="4.34" fill="#14dc64"/>
<rect x="508" y="264.07" width="18.6" height="4.34" fill="#dc1446"/>
<rect x="508" y="268.06" width="18.6" height="4.34" fill="#5014dc"/>
<rect x="508" y="272.05" width="18.6" height="4.34" fill="#dc14aa"/>
<rect x="508" y="276.04" width="18.6" height="4.34" fill="#14dc28"/>
<rect x="508" y="280.03" width="18.6" height="8.33" fill="#1478dc"/>
<rect x="508" y="288.01" width="18.6" height="4.34" fill="#14dcd2"/>
<rect x="508" y="292.00" width="18.6" height="4.34" fill="#1432dc"/>
<rect x="508" y="295.99" width="18.6" height="4.34" fill="#dc14aa"/>
<rect x="508" y="299.98" width="18.6" height="8.33" fill="#14dc28"/>
<rect x="508" y="307.96" width="18.6" height="4.34" fill="#dc6e0c"/>
<rect x="508" y="311.95" width="18.6" height="4.34" fill="#dc280c"/>
<rect x="508" y="315.94" width="18.6" height="4.34" fill="#1496dc"/>
<rect x="508" y="319.93" width="18.6" height="8.33" fill="#dc960c"/>
<rect x="508" y="327.91" width="18.6" height="4.34" fill="#b4dc0c"/>
<rect x="508" y="331.90" width="18.6" height="4.34" fill="#14dc64"/>
<rect x="508" y="335.89" width="18.6" height="4.34" fill="#64dc0c"/>
<rect x="508" y="339.88" width="18.6" height="4.34" fill="#14dc28"/>
<rect x="508" y="343.87" width="18.6" height="4.34" fill="#14dcd2"/>
<rect x="508" y="347.86" width="18.6" height="12.32" fill="#5014dc"/>
<rect x="508" y="359.83" width="18.6" height="4.34" fill="#9614dc"/>
<rect x="508" y="363.82" width="18.6" height="4.34" fill="#dc14aa"/>
<rect x="508" y="367.81" width="18.6" height="4.34" fill="#2814dc"/>
<rect x="508" y="371.80" width="18.6" height="8.33" fill="#14dc64"/>
<rect x="508" y="379.78" width="18.6" height="4.34" fill="#28dc14"/>
<rect x="508" y="383.77" width="18.6" height="4.34" fill="#b4dc0c"/>
<rect x="508" y="387.76" width="18.6" height="4.34" fill="#dc1428"/>
<rect x="508" y="391.75" width="18.6" height="12.32" fill="#1478dc"/>
<rect x="508" y="403.72" width="18.6" height="4.34" fill="#dc6e0c"/>
<rect x="508" y="407.71" width="18.6" height="8.33" fill="#dc960c"/>
<rect x="526.3" y="172.30" width="19.3" height="4.34" fill="#dc1432"/>
<rect x="526.3" y="176.29" width="19.3" height="4.34" fill="#a2dc10"/>
<rect x="526.3" y="180.28" width="19.3" height="4.34" fill="#1428dc"/>
<rect x="526.3" y="184.27" width="19.3" height="4.34" fill="#a2dc10"/>
<rect x="526.3" y="188.26" width="19.3" height="4.34" fill="#14dcdc"/>
<rect x="526.3" y="192.25" width="19.3" height="8.33" fill="#dc3410"/>
<rect x="526.3" y="200.23" width="19.3" height="4.34" fill="#14dc32"/>
<rect x="526.3" y="204.22" width="19.3" height="4.34" fill="#dc5e0c"/>
<rect x="526.3" y="208.21" width="19.3" height="4.34" fill="#dc14dc"/>
<rect x="526.3" y="212.20" width="19.3" height="108.08" fill="#a2dc10"/>
<rect x="526.3" y="319.93" width="19.3" height="4.34" fill="#dc5e0c"/>
<rect x="526.3" y="323.92" width="19.3" height="4.34" fill="#dc3410"/>
<rect x="526.3" y="327.91" width="19.3" height="4.34" fill="#14dca0"/>
<rect x="526.3" y="331.90" width="19.3" height="4.34" fill="#dc1496"/>
<rect x="526.3" y="335.89" width="19.3" height="4.34" fill="#14dc32"/>
<rect x="526.3" y="339.88" width="19.3" height="4.34" fill="#1464dc"/>
<rect x="526.3" y="343.87" width="19.3" height="4.34" fill="#5a14dc"/>
<rect x="526.3" y="347.86" width="19.3" height="4.34" fill="#dc3410"/>
<rect x="526.3" y="351.85" width="19.3" height="4.34" fill="#1428dc"/>
<rect x="526.3" y="355.84" width="19.3" height="4.34" fill="#14dc32"/>
<rect x="526.3" y="359.83" width="19.3" height="4.34" fill="#dc9a0c"/>
<rect x="526.3" y="363.82" width="19.3" height="4.34" fill="#1428dc"/>
<rect x="526.3" y="367.81" width="19.3" height="36.26" fill="#a2dc10"/>
<rect x="526.3" y="403.72" width="19.3" height="4.34" fill="#58dc10"/>
<rect x="526.3" y="407.71" width="19.3" height="8.33" fill="#dc3410"/>
<text transform="translate(516.6,170.2) rotate(-38)" font-size="7.6" fill="#222" stroke="#222" stroke-width=".15">Year</text>
<text transform="translate(535.4,170.2) rotate(-39)" font-size="7.6" fill="#222" stroke="#222" stroke-width=".15">Host</text>
<text x="546.8" y="177.00" font-size="7.5" fill="#c4304a" stroke="#c4304a" stroke-width=".18">KRRV9601</text>
<line x1="546.8" y1="178.5" x2="581.8" y2="178.5" stroke="#c4304a" stroke-width="1" opacity="0.72"/>
<line x1="546.8" y1="182.5" x2="577.3" y2="182.5" stroke="#c4304a" stroke-width="1" opacity="0.72"/>
<text x="546.8" y="188.94" font-size="7.5" fill="#c4304a" stroke="#c4304a" stroke-width=".18">SE-SVA-1033</text>
<line x1="546.8" y1="190.5" x2="577.3" y2="190.5" stroke="#c4304a" stroke-width="1" opacity="0.72"/>
<line x1="546.8" y1="194.5" x2="581.8" y2="194.5" stroke="#c4304a" stroke-width="1" opacity="0.72"/>
<text x="546.8" y="200.88" font-size="7.5" fill="#c4304a" stroke="#c4304a" stroke-width=".18">DK-6p403</text>
<line x1="546.8" y1="202.5" x2="597.6" y2="202.5" stroke="#c4304a" stroke-width="1" opacity="0.72"/>
<line x1="546.8" y1="206.5" x2="577.3" y2="206.5" stroke="#c4304a" stroke-width="1" opacity="0.72"/>
<text x="546.8" y="212.82" font-size="7.5" fill="#c4304a" stroke="#c4304a" stroke-width=".18">DK-1p40</text>
<line x1="546.8" y1="214.5" x2="577.3" y2="214.5" stroke="#c4304a" stroke-width="1" opacity="0.72"/>
<line x1="546.8" y1="218.5" x2="577.3" y2="218.5" stroke="#c4304a" stroke-width="1" opacity="0.72"/>
<text x="546.8" y="224.76" font-size="7.5" fill="#c4304a" stroke="#c4304a" stroke-width=".18">AU-8-95</text>
<line x1="546.8" y1="226.5" x2="595.1" y2="226.5" stroke="#c4304a" stroke-width="1" opacity="0.72"/>
<line x1="546.8" y1="230.5" x2="590.6" y2="230.5" stroke="#c4304a" stroke-width="1" opacity="0.72"/>
<text x="546.8" y="236.70" font-size="7.5" fill="#c4304a" stroke="#c4304a" stroke-width=".18">DK-200098</text>
<line x1="546.8" y1="238.5" x2="577.3" y2="238.5" stroke="#c4304a" stroke-width="1" opacity="0.72"/>
<line x1="546.8" y1="242.5" x2="559.4" y2="242.5" stroke="#c4304a" stroke-width="1" opacity="0.72"/>
<text x="546.8" y="248.64" font-size="7.5" fill="#c4304a" stroke="#c4304a" stroke-width=".18">DK-3946</text>
<line x1="546.8" y1="250.5" x2="582.6" y2="250.5" stroke="#c4304a" stroke-width="1" opacity="0.72"/>
<line x1="546.8" y1="254.5" x2="577.3" y2="254.5" stroke="#c4304a" stroke-width="1" opacity="0.72"/>
<text x="546.8" y="260.58" font-size="7.5" fill="#c4304a" stroke="#c4304a" stroke-width=".18">DK-6137</text>
<line x1="546.8" y1="261.5" x2="577.3" y2="261.5" stroke="#c4304a" stroke-width="1" opacity="0.72"/>
<line x1="546.8" y1="266.5" x2="590.6" y2="266.5" stroke="#c4304a" stroke-width="1" opacity="0.72"/>
<text x="546.8" y="272.52" font-size="7.5" fill="#c4304a" stroke="#c4304a" stroke-width=".18">DK-9795568</text>
<line x1="546.8" y1="273.5" x2="577.3" y2="273.5" stroke="#c4304a" stroke-width="1" opacity="0.72"/>
<line x1="546.8" y1="278.5" x2="590.6" y2="278.5" stroke="#c4304a" stroke-width="1" opacity="0.72"/>
<text x="546.8" y="284.46" font-size="7.5" fill="#c4304a" stroke="#c4304a" stroke-width=".18">DK-200027-3</text>
<line x1="546.8" y1="285.5" x2="592.2" y2="285.5" stroke="#c4304a" stroke-width="1" opacity="0.72"/>
<line x1="546.8" y1="289.5" x2="590.6" y2="289.5" stroke="#c4304a" stroke-width="1" opacity="0.72"/>
<text x="546.8" y="296.40" font-size="7.5" fill="#c4304a" stroke="#c4304a" stroke-width=".18">DK-6045</text>
<line x1="546.8" y1="297.5" x2="577.3" y2="297.5" stroke="#c4304a" stroke-width="1" opacity="0.72"/>
<line x1="546.8" y1="301.5" x2="590.6" y2="301.5" stroke="#c4304a" stroke-width="1" opacity="0.72"/>
<text x="546.8" y="308.34" font-size="7.5" fill="#c4304a" stroke="#c4304a" stroke-width=".18">DK-9895024</text>
<line x1="546.8" y1="309.5" x2="590.6" y2="309.5" stroke="#c4304a" stroke-width="1" opacity="0.72"/>
<line x1="546.8" y1="313.5" x2="577.3" y2="313.5" stroke="#c4304a" stroke-width="1" opacity="0.72"/>
<text x="546.8" y="320.28" font-size="7.5" fill="#c4304a" stroke="#c4304a" stroke-width=".18">FR-0284</text>
<line x1="546.8" y1="321.5" x2="577.3" y2="321.5" stroke="#c4304a" stroke-width="1" opacity="0.72"/>
<line x1="546.8" y1="325.5" x2="577.3" y2="325.5" stroke="#c4304a" stroke-width="1" opacity="0.72"/>
<text x="546.8" y="332.22" font-size="7.5" fill="#c4304a" stroke="#c4304a" stroke-width=".18">US-Goby1-5</text>
<line x1="546.8" y1="333.5" x2="581.8" y2="333.5" stroke="#c4304a" stroke-width="1" opacity="0.72"/>
<line x1="546.8" y1="337.5" x2="592.2" y2="337.5" stroke="#c4304a" stroke-width="1" opacity="0.72"/>
<text x="546.8" y="344.16" font-size="7.5" fill="#c4304a" stroke="#c4304a" stroke-width=".18">UK-MLA98-6PT</text>
<line x1="546.8" y1="345.5" x2="592.2" y2="345.5" stroke="#c4304a" stroke-width="1" opacity="0.72"/>
<line x1="546.8" y1="349.5" x2="581.8" y2="349.5" stroke="#c4304a" stroke-width="1" opacity="0.72"/>
<text x="546.8" y="356.10" font-size="7.5" fill="#c4304a" stroke="#c4304a" stroke-width=".18">IR-F13.02.97</text>
<line x1="546.8" y1="357.5" x2="581.8" y2="357.5" stroke="#c4304a" stroke-width="1" opacity="0.72"/>
<line x1="546.8" y1="361.5" x2="577.3" y2="361.5" stroke="#c4304a" stroke-width="1" opacity="0.72"/>
<text x="546.8" y="368.04" font-size="7.5" fill="#c4304a" stroke="#c4304a" stroke-width=".18">UK-860-94</text>
<line x1="546.8" y1="369.5" x2="570.8" y2="369.5" stroke="#c4304a" stroke-width="1" opacity="0.72"/>
<line x1="546.8" y1="373.5" x2="577.3" y2="373.5" stroke="#c4304a" stroke-width="1" opacity="0.72"/>
<text x="546.8" y="379.98" font-size="7.5" fill="#c4304a" stroke="#c4304a" stroke-width=".18">DK-5123</text>
<line x1="546.8" y1="381.5" x2="577.3" y2="381.5" stroke="#c4304a" stroke-width="1" opacity="0.72"/>
<line x1="546.8" y1="385.5" x2="594.2" y2="385.5" stroke="#c4304a" stroke-width="1" opacity="0.72"/>
<text x="546.8" y="391.92" font-size="7.5" fill="#c4304a" stroke="#c4304a" stroke-width=".18">DK-F1</text>
<line x1="546.8" y1="393.5" x2="576.8" y2="393.5" stroke="#c4304a" stroke-width="1" opacity="0.72"/>
<line x1="546.8" y1="397.5" x2="572.3" y2="397.5" stroke="#c4304a" stroke-width="1" opacity="0.72"/>
<text x="546.8" y="403.86" font-size="7.5" fill="#c4304a" stroke="#c4304a" stroke-width=".18">NO-A16368G</text>
<line x1="546.8" y1="405.5" x2="591.6" y2="405.5" stroke="#c4304a" stroke-width="1" opacity="0.72"/>
<line x1="546.8" y1="409.5" x2="572.8" y2="409.5" stroke="#c4304a" stroke-width="1" opacity="0.72"/>
<text x="546.8" y="415.80" font-size="7.5" fill="#c4304a" stroke="#c4304a" stroke-width=".18">UK-9643</text>
<rect x="132.5" y="25.5" width="171.50" height="139.90" fill="#fff" stroke="#555" stroke-width="1"/>
<text x="136" y="36.50" font-size="7.6" fill="#1c1c1c" stroke="#1c1c1c" stroke-width=".12">Host</text>
<text x="136" y="47.10" font-size="7.6" fill="#1c1c1c" stroke="#1c1c1c" stroke-width=".12">(Node color, Metadata layer #2)</text>
<rect x="138.9" y="53.20" width="9.2" height="9.1" fill="#000000" stroke="#000000" stroke-width="0.6"/>
<text x="151.4" y="59.80" font-size="7.6" fill="#1c1c1c" stroke="#1c1c1c" stroke-width=".12" font-style="italic">Unknown</text>
<rect x="138.9" y="65.63" width="9.2" height="9.1" fill="#1428dc" stroke="#1020b4" stroke-width="0.6"/>
<text x="151.4" y="72.23" font-size="7.6" fill="#1c1c1c" stroke="#1c1c1c" stroke-width=".12">Blue whiting</text>
<rect x="138.9" y="78.06" width="9.2" height="9.1" fill="#dc1496" stroke="#b4107a" stroke-width="0.6"/>
<text x="151.4" y="84.66" font-size="7.6" fill="#1c1c1c" stroke="#1c1c1c" stroke-width=".12">Coho salmon</text>
<rect x="138.9" y="90.49" width="9.2" height="9.1" fill="#dc9a0c" stroke="#b47e09" stroke-width="0.6"/>
<text x="151.4" y="97.09" font-size="7.6" fill="#1c1c1c" stroke="#1c1c1c" stroke-width=".12">Eel</text>
<rect x="138.9" y="102.92" width="9.2" height="9.1" fill="#14dc32" stroke="#10b429" stroke-width="0.6"/>
<text x="151.4" y="109.52" font-size="7.6" fill="#1c1c1c" stroke="#1c1c1c" stroke-width=".12">Herring</text>
<rect x="138.9" y="115.35" width="9.2" height="9.1" fill="#1464dc" stroke="#1052b4" stroke-width="0.6"/>
<text x="151.4" y="121.95" font-size="7.6" fill="#1c1c1c" stroke="#1c1c1c" stroke-width=".12">Norway prout</text>
<rect x="138.9" y="127.78" width="9.2" height="9.1" fill="#dc14dc" stroke="#b410b4" stroke-width="0.6"/>
<text x="151.4" y="134.38" font-size="7.6" fill="#1c1c1c" stroke="#1c1c1c" stroke-width=".12">Rockling</text>
<rect x="138.9" y="140.21" width="9.2" height="9.1" fill="#dc5e0c" stroke="#b44d09" stroke-width="0.6"/>
<text x="151.4" y="146.81" font-size="7.6" fill="#1c1c1c" stroke="#1c1c1c" stroke-width=".12">Sprat</text>
<rect x="138.9" y="152.64" width="9.2" height="9.1" fill="#32dc14" stroke="#29b410" stroke-width="0.6"/>
<text x="151.4" y="159.24" font-size="7.6" fill="#1c1c1c" stroke="#1c1c1c" stroke-width=".12">Whiting</text>
<rect x="224.1" y="53.20" width="9.2" height="9.1" fill="#dc3410" stroke="#b42a0d" stroke-width="0.6"/>
<text x="236.8" y="59.80" font-size="7.6" fill="#1c1c1c" stroke="#1c1c1c" stroke-width=".12">Atlantic Herring</text>
<rect x="224.1" y="65.63" width="9.2" height="9.1" fill="#58dc10" stroke="#48b40d" stroke-width="0.6"/>
<text x="236.8" y="72.23" font-size="7.6" fill="#1c1c1c" stroke="#1c1c1c" stroke-width=".12">Cod</text>
<rect x="224.1" y="78.06" width="9.2" height="9.1" fill="#14dcdc" stroke="#10b4b4" stroke-width="0.6"/>
<text x="236.8" y="84.66" font-size="7.6" fill="#1c1c1c" stroke="#1c1c1c" stroke-width=".12">Dab</text>
<rect x="224.1" y="90.49" width="9.2" height="9.1" fill="#5a14dc" stroke="#4910b4" stroke-width="0.6"/>
<text x="236.8" y="97.09" font-size="7.6" fill="#1c1c1c" stroke="#1c1c1c" stroke-width=".12">Haddock</text>
<rect x="224.1" y="102.92" width="9.2" height="9.1" fill="#dc1432" stroke="#b41029" stroke-width="0.6"/>
<text x="236.8" y="109.52" font-size="7.6" fill="#1c1c1c" stroke="#1c1c1c" stroke-width=".12">Japanese flounder</text>
<rect x="224.1" y="115.35" width="9.2" height="9.1" fill="#a2dc10" stroke="#84b40d" stroke-width="0.6"/>
<text x="236.8" y="121.95" font-size="7.6" fill="#1c1c1c" stroke="#1c1c1c" stroke-width=".12">Rainbow trout</text>
<rect x="224.1" y="127.78" width="9.2" height="9.1" fill="#14dca0" stroke="#10b483" stroke-width="0.6"/>
<text x="236.8" y="134.38" font-size="7.6" fill="#1c1c1c" stroke="#1c1c1c" stroke-width=".12">Round goby</text>
<rect x="224.1" y="140.21" width="9.2" height="9.1" fill="#2814dc" stroke="#2010b4" stroke-width="0.6"/>
<text x="236.8" y="146.81" font-size="7.6" fill="#1c1c1c" stroke="#1c1c1c" stroke-width=".12">Turbot</text>
<rect x="312.5" y="27.6" width="78.80" height="176.70" fill="#fff" stroke="#555" stroke-width="1"/>
<text x="316.5" y="38.30" font-size="7.6" fill="#1c1c1c" stroke="#1c1c1c" stroke-width=".12">Year</text>
<text x="316.5" y="48.40" font-size="7.6" fill="#1c1c1c" stroke="#1c1c1c" stroke-width=".12">(Metadata layer #1)</text>
<rect x="319.4" y="55.10" width="9.3" height="9" fill="#dc1428" stroke="#b41020" stroke-width="0.6"/>
<text x="332.6" y="61.60" font-size="7.6" fill="#1c1c1c" stroke="#1c1c1c" stroke-width=".12">1962</text>
<rect x="358.1" y="55.10" width="9.3" height="9" fill="#1450dc" stroke="#1041b4" stroke-width="0.6"/>
<text x="371.3" y="61.60" font-size="7.6" fill="#1c1c1c" stroke="#1c1c1c" stroke-width=".12">1968</text>
<rect x="319.4" y="67.51" width="9.3" height="9" fill="#96dc0c" stroke="#7ab409" stroke-width="0.6"/>
<text x="332.6" y="74.01" font-size="7.6" fill="#1c1c1c" stroke="#1c1c1c" stroke-width=".12">1970</text>
<rect x="358.1" y="67.51" width="9.3" height="9" fill="#dc14c8" stroke="#b410a4" stroke-width="0.6"/>
<text x="371.3" y="74.01" font-size="7.6" fill="#1c1c1c" stroke="#1c1c1c" stroke-width=".12">1971</text>
<rect x="319.4" y="79.92" width="9.3" height="9" fill="#14dcaa" stroke="#10b48b" stroke-width="0.6"/>
<text x="332.6" y="86.42" font-size="7.6" fill="#1c1c1c" stroke="#1c1c1c" stroke-width=".12">1975</text>
<rect x="358.1" y="79.92" width="9.3" height="9" fill="#dc6e0c" stroke="#b45a09" stroke-width="0.6"/>
<text x="371.3" y="86.42" font-size="7.6" fill="#1c1c1c" stroke="#1c1c1c" stroke-width=".12">1979</text>
<rect x="319.4" y="92.33" width="9.3" height="9" fill="#2814dc" stroke="#2010b4" stroke-width="0.6"/>
<text x="332.6" y="98.83" font-size="7.6" fill="#1c1c1c" stroke="#1c1c1c" stroke-width=".12">1981</text>
<rect x="358.1" y="92.33" width="9.3" height="9" fill="#28dc14" stroke="#20b410" stroke-width="0.6"/>
<text x="371.3" y="98.83" font-size="7.6" fill="#1c1c1c" stroke="#1c1c1c" stroke-width=".12">1982</text>
<rect x="319.4" y="104.74" width="9.3" height="9" fill="#dc1464" stroke="#b41052" stroke-width="0.6"/>
<text x="332.6" y="111.24" font-size="7.6" fill="#1c1c1c" stroke="#1c1c1c" stroke-width=".12">1983</text>
<rect x="358.1" y="104.74" width="9.3" height="9" fill="#1496dc" stroke="#107ab4" stroke-width="0.6"/>
<text x="371.3" y="111.24" font-size="7.6" fill="#1c1c1c" stroke="#1c1c1c" stroke-width=".12">1984</text>
<rect x="319.4" y="117.15" width="9.3" height="9" fill="#dcd20c" stroke="#b4ac09" stroke-width="0.6"/>
<text x="332.6" y="123.65" font-size="7.6" fill="#1c1c1c" stroke="#1c1c1c" stroke-width=".12">1986</text>
<rect x="358.1" y="117.15" width="9.3" height="9" fill="#9614dc" stroke="#7a10b4" stroke-width="0.6"/>
<text x="371.3" y="123.65" font-size="7.6" fill="#1c1c1c" stroke="#1c1c1c" stroke-width=".12">1987</text>
<rect x="319.4" y="129.56" width="9.3" height="9" fill="#14dc64" stroke="#10b452" stroke-width="0.6"/>
<text x="332.6" y="136.06" font-size="7.6" fill="#1c1c1c" stroke="#1c1c1c" stroke-width=".12">1988</text>
<rect x="358.1" y="129.56" width="9.3" height="9" fill="#dc280c" stroke="#b42009" stroke-width="0.6"/>
<text x="371.3" y="136.06" font-size="7.6" fill="#1c1c1c" stroke="#1c1c1c" stroke-width=".12">1990</text>
<rect x="319.4" y="141.97" width="9.3" height="9" fill="#1432dc" stroke="#1029b4" stroke-width="0.6"/>
<text x="332.6" y="148.47" font-size="7.6" fill="#1c1c1c" stroke="#1c1c1c" stroke-width=".12">1991</text>
<rect x="358.1" y="141.97" width="9.3" height="9" fill="#64dc0c" stroke="#52b409" stroke-width="0.6"/>
<text x="371.3" y="148.47" font-size="7.6" fill="#1c1c1c" stroke="#1c1c1c" stroke-width=".12">1993</text>
<rect x="319.4" y="154.38" width="9.3" height="9" fill="#dc14aa" stroke="#b4108b" stroke-width="0.6"/>
<text x="332.6" y="160.88" font-size="7.6" fill="#1c1c1c" stroke="#1c1c1c" stroke-width=".12">1994</text>
<rect x="358.1" y="154.38" width="9.3" height="9" fill="#14dcd2" stroke="#10b4ac" stroke-width="0.6"/>
<text x="371.3" y="160.88" font-size="7.6" fill="#1c1c1c" stroke="#1c1c1c" stroke-width=".12">1995</text>
<rect x="319.4" y="166.79" width="9.3" height="9" fill="#dc960c" stroke="#b47a09" stroke-width="0.6"/>
<text x="332.6" y="173.29" font-size="7.6" fill="#1c1c1c" stroke="#1c1c1c" stroke-width=".12">1996</text>
<rect x="358.1" y="166.79" width="9.3" height="9" fill="#5014dc" stroke="#4110b4" stroke-width="0.6"/>
<text x="371.3" y="173.29" font-size="7.6" fill="#1c1c1c" stroke="#1c1c1c" stroke-width=".12">1997</text>
<rect x="319.4" y="179.20" width="9.3" height="9" fill="#14dc28" stroke="#10b420" stroke-width="0.6"/>
<text x="332.6" y="185.70" font-size="7.6" fill="#1c1c1c" stroke="#1c1c1c" stroke-width=".12">1998</text>
<rect x="358.1" y="179.20" width="9.3" height="9" fill="#dc1446" stroke="#b41039" stroke-width="0.6"/>
<text x="371.3" y="185.70" font-size="7.6" fill="#1c1c1c" stroke="#1c1c1c" stroke-width=".12">1999</text>
<rect x="319.4" y="191.61" width="9.3" height="9" fill="#1478dc" stroke="#1062b4" stroke-width="0.6"/>
<text x="332.6" y="198.11" font-size="7.6" fill="#1c1c1c" stroke="#1c1c1c" stroke-width=".12">2000</text>
<rect x="358.1" y="191.61" width="9.3" height="9" fill="#b4dc0c" stroke="#93b409" stroke-width="0.6"/>
<text x="371.3" y="198.11" font-size="7.6" fill="#1c1c1c" stroke="#1c1c1c" stroke-width=".12">2006</text>
<rect x="401.3" y="29.6" width="73.70" height="114.90" fill="#fff" stroke="#555" stroke-width="1"/>
<text x="405.5" y="40.10" font-size="7.6" fill="#1c1c1c" stroke="#1c1c1c" stroke-width=".12">Country</text>
<text x="405.5" y="50.60" font-size="7.6" fill="#1c1c1c" stroke="#1c1c1c" stroke-width=".12">(Node symbol size)</text>
<rect x="411.80" y="60.10" width="2.4" height="2.4" fill="#000"/>
<text x="420.8" y="64.00" font-size="7.6" fill="#1c1c1c" stroke="#1c1c1c" stroke-width=".12">AU</text>
<rect x="411.30" y="71.97" width="3.4" height="3.4" fill="#000"/>
<text x="420.8" y="76.37" font-size="7.6" fill="#1c1c1c" stroke="#1c1c1c" stroke-width=".12">DE</text>
<rect x="410.70" y="83.74" width="4.6" height="4.6" fill="#000"/>
<text x="420.8" y="88.74" font-size="7.6" fill="#1c1c1c" stroke="#1c1c1c" stroke-width=".12">FI</text>
<rect x="410.20" y="95.61" width="5.6" height="5.6" fill="#000"/>
<text x="420.8" y="101.11" font-size="7.6" fill="#1c1c1c" stroke="#1c1c1c" stroke-width=".12">GE</text>
<rect x="409.70" y="107.48" width="6.6" height="6.6" fill="#000"/>
<text x="420.8" y="113.48" font-size="7.6" fill="#1c1c1c" stroke="#1c1c1c" stroke-width=".12">JP</text>
<rect x="408.90" y="119.05" width="8.2" height="8.2" fill="#000"/>
<text x="420.8" y="125.85" font-size="7.6" fill="#1c1c1c" stroke="#1c1c1c" stroke-width=".12">SE</text>
<rect x="408.20" y="130.72" width="9.6" height="9.6" fill="#000"/>
<text x="420.8" y="138.22" font-size="7.6" fill="#1c1c1c" stroke="#1c1c1c" stroke-width=".12">USA</text>
<rect x="448.05" y="59.85" width="2.9" height="2.9" fill="#000"/>
<text x="457" y="64.00" font-size="7.6" fill="#1c1c1c" stroke="#1c1c1c" stroke-width=".12">CH</text>
<rect x="447.50" y="71.67" width="4" height="4" fill="#000"/>
<text x="457" y="76.37" font-size="7.6" fill="#1c1c1c" stroke="#1c1c1c" stroke-width=".12">DK</text>
<rect x="447.00" y="83.54" width="5" height="5" fill="#000"/>
<text x="457" y="88.74" font-size="7.6" fill="#1c1c1c" stroke="#1c1c1c" stroke-width=".12">FR</text>
<rect x="446.50" y="95.41" width="6" height="6" fill="#000"/>
<text x="457" y="101.11" font-size="7.6" fill="#1c1c1c" stroke="#1c1c1c" stroke-width=".12">IR</text>
<rect x="445.80" y="107.08" width="7.4" height="7.4" fill="#000"/>
<text x="457" y="113.48" font-size="7.6" fill="#1c1c1c" stroke="#1c1c1c" stroke-width=".12">NO</text>
<rect x="445.00" y="118.65" width="9" height="9" fill="#000"/>
<text x="457" y="125.85" font-size="7.6" fill="#1c1c1c" stroke="#1c1c1c" stroke-width=".12">UK</text>
<rect x="482.4" y="30.5" width="72.10" height="89.70" fill="#fff" stroke="#555" stroke-width="1"/>
<text x="485.6" y="40.50" font-size="7.6" fill="#1c1c1c" stroke="#1c1c1c" stroke-width=".12">Water</text>
<text x="485.6" y="51.90" font-size="7.6" fill="#1c1c1c" stroke="#1c1c1c" stroke-width=".12">(Node shape)</text>
<text x="501" y="64.30" font-size="7.6" fill="#1c1c1c" stroke="#1c1c1c" stroke-width=".12" font-style="italic">Unknown</text>
<polygon points="488.2,74.3 493,69.5 497.8,74.3 493,79.1" fill="#000"/>
<text x="501" y="76.80" font-size="7.6" fill="#1c1c1c" stroke="#1c1c1c" stroke-width=".12">Brackish water</text>
<circle cx="493" cy="86.8" r="4.7" fill="#000"/>
<text x="501" y="89.20" font-size="7.6" fill="#1c1c1c" stroke="#1c1c1c" stroke-width=".12">Fresh water</text>
<rect x="488.3" y="94.3" width="9.5" height="9.5" fill="#000"/>
<text x="501" y="101.50" font-size="7.6" fill="#1c1c1c" stroke="#1c1c1c" stroke-width=".12">Sea water</text>
<circle cx="493" cy="111.5" r="4.2" fill="#fff" stroke="#000" stroke-width="1.2"/>
<text x="501" y="113.80" font-size="7.6" fill="#1c1c1c" stroke="#1c1c1c" stroke-width=".12">Unknown</text>
</g>
</svg>

<!-- canvas vertical scrollbar -->
<div class="sbv" style="left:598.6px;top:16.4px;height:422.2px;background:#eeeeee"></div>
<div class="au" style="left:601.2px;top:21px"></div>
<div class="thumbv" style="left:598.6px;top:28px;height:315.4px;width:9.3px"></div>
<div class="grip" style="left:601.5px;top:184.6px"></div>
<div class="ad" style="left:601.2px;top:431.5px"></div>
<!-- canvas horizontal scrollbar -->
<div class="a" style="left:1.6px;top:438.6px;width:597px;height:10.4px;background:#eeeeee"></div>
<div class="a" style="left:598.6px;top:438.6px;width:10.2px;height:10.4px;background:#fff"></div>
<div class="al" style="left:5.4px;top:441.5px"></div>
<div class="thumbh" style="left:156.2px;top:439.1px;width:282.8px;height:9.6px"></div>
<div class="grip" style="left:295px;top:442.3px;transform:rotate(90deg);transform-origin:2px 1.5px"></div>
<div class="ar" style="left:591.5px;top:441.4px"></div>
<!-- bottom toolbar -->
<div class="a" style="left:1.6px;top:449px;width:607.4px;height:15px;background:#f0f0f0"></div>
<div class="a" style="left:3px;top:450.3px;width:11.2px;height:11.4px;background:#c2c2c2;border:.8px solid #4a92e6;box-sizing:border-box;box-shadow:0 0 1.2px #7fb2ee"></div>
<svg class="a" style="left:4px;top:451.8px" width="10" height="9" viewBox="0 0 10 9"><path d="M0 4.3H2.4 M2.4 2V6.6 M2.4 2H7.8 M2.4 6.6H7.8 M4.6 3.4V5.4 M4.6 3.4H7.8 M4.6 5.4H7.8" fill="none" stroke="#3322c4" stroke-width="1.15"/><path d="M8.9 1.5V2.5M8.9 4V5M8.9 6.2V7.2" stroke="#1a1a1a" stroke-width="1"/></svg>
<svg class="a" style="left:16.2px;top:451.7px" width="10" height="8.2" viewBox="0 0 10 8.2"><rect x=".4" y=".4" width="9.2" height="7.4" fill="#f4f6fa" stroke="#6e6c92" stroke-width=".8"/><rect x=".8" y=".8" width="8.4" height="1.7" fill="#8fc487"/><rect x=".8" y=".8" width="1.6" height="6.6" fill="#8fc487"/><path d="M.4 2.7H9.6M.4 4.4H9.6M.4 6.1H9.6M2.6 .4V7.8M6 .4V7.8" stroke="#77759a" stroke-width=".6" fill="none"/></svg>
<svg class="a" style="left:29.3px;top:451.6px" width="7.6" height="9" viewBox="0 0 7.6 9"><rect x=".4" y=".4" width="6.8" height="8.2" rx=".8" fill="#c9dbf0" stroke="#7fa3d2" stroke-width=".8"/><circle cx="3.8" cy="4.2" r="1.9" fill="#eef4fb" stroke="#7a9ccb" stroke-width=".9"/><path d="M1.2 1.4L2.4 2.6M6.4 1.4L5.2 2.6M1.2 7.2L2.4 6M6.4 7.2L5.2 6" stroke="#e8f0fa" stroke-width=".7"/></svg>
<svg class="a" style="left:42px;top:451.2px" width="9.4" height="9.6" viewBox="0 0 9.4 9.6"><path d="M.6 .8H4.6L6.2 2.4V9H.6Z" fill="#f6f9fd" stroke="#6b93c8" stroke-width=".8"/><path d="M3.6 5.4L5 8.2L8.4 1.4" fill="none" stroke="#1e9440" stroke-width="1.4"/></svg>
<!-- right tools -->
<div class="a" style="left:494.6px;top:450px;width:11px;height:12.4px;background:#cfcfcf"></div>
<svg class="a" style="left:496.4px;top:451.4px" width="8" height="10" viewBox="0 0 8 10"><path d="M.8 .6V8L2.7 6.3L4.2 9.5L5.5 8.9L4 5.8H6.6Z" fill="#fff" stroke="#222" stroke-width=".8"/></svg>
<svg class="a" style="left:507px;top:450.4px" width="11" height="12" viewBox="0 0 11 12"><circle cx="4.3" cy="4.8" r="3.2" fill="#f4f8ff" stroke="#333" stroke-width="1"/><path d="M2.8 4.8H5.8M4.3 3.3V6.3" stroke="#333" stroke-width=".8"/><path d="M6.6 7.2L9.4 10.4" stroke="#333" stroke-width="1.6"/><path d="M8.6 1.2L9.6 .2" stroke="#333" stroke-width=".6"/></svg>
<div class="a" style="left:519.2px;top:455.6px;width:5px;height:1px;background:#222"></div>
<div class="a" style="left:528.8px;top:454.4px;width:44.8px;height:2.4px;border:.7px solid #666;box-sizing:border-box;background:#fff"></div>
<div class="knob" style="left:537.8px;top:451.2px;height:6.4px"></div>
<div class="a" style="left:578.8px;top:455.5px;width:6px;height:1.1px;background:#222"></div>
<div class="a" style="left:581.25px;top:453px;width:1.1px;height:6px;background:#222"></div>
<svg class="a" style="left:588.6px;top:452px" width="9" height="8" viewBox="0 0 9 8"><rect x=".4" y=".4" width="8.2" height="7.2" fill="#e4e4e4" stroke="#b5b5b5" stroke-width=".8"/><path d="M2 4H7M2 4L3.4 2.8M2 4L3.4 5.2M7 4L5.6 2.8M7 4L5.6 5.2" stroke="#a8a8a8" stroke-width=".7" fill="none"/></svg>
<svg class="a" style="left:598.4px;top:452px" width="10" height="8" viewBox="0 0 10 8"><rect x=".4" y=".4" width="9.2" height="7.2" fill="#f4f4f4" stroke="#444" stroke-width=".8"/><path d="M2 4H8M2 4L3.6 2.6M2 4L3.6 5.4M8 4L6.4 2.6M8 4L6.4 5.4" stroke="#222" stroke-width=".8" fill="none"/></svg>
<!-- bottom frame -->
<div class="a" style="left:0;top:463.2px;width:800px;height:.9px;background:#c2c2c2"></div><div class="a" style="left:0;top:464.1px;width:800px;height:2px;background:#ededed"></div>

<div class="a" style="left:608.8px;top:14.3px;width:2.6px;height:450px;background:#f0f0f0"></div>
<div class="a" style="left:611.2px;top:13.6px;width:189px;height:451px;background:#f0f0f0;border-left:1px solid #7c7c7c;border-top:1px solid #b4b4b4;box-sizing:border-box"></div>
<div class="a" style="left:797.6px;top:13.6px;width:2.4px;height:451px;background:#f7f7f7"></div>
<div class="a" style="left:615px;top:17px;width:1.3px;height:7.6px;background:#2c2c2c"></div>
<div class="a" style="left:617.6px;top:17.6px;width:0;height:0;border-top:3.2px solid transparent;border-bottom:3.2px solid transparent;border-left:3.8px solid #2c2c2c"></div>
<div class="t" style="left:625px;top:16.3px;color:#39404e;-webkit-text-stroke-color:#39404e;font-size:7.7px">Tree Settings</div>
<div class="a" style="left:612.4px;top:24.6px;width:172px;height:7px;overflow:hidden"><div class="dd" style="left:3.6px;top:-5.4px;width:43px;background:linear-gradient(#f4f4f4,#e6e6e6)"><i style="top:3.6px"></i></div><div class="dd" style="left:50px;top:-5.4px;width:101.6px;background:linear-gradient(#f4f4f4,#e6e6e6)"></div><div class="t" style="left:8px;top:-5.6px;font-size:7px">Circle</div><div class="t" style="left:54px;top:-5.6px;font-size:7px">Unknown</div></div>
<div class="tri-d" style="left:613.4px;top:38.8px"></div>
<div class="t" style="left:620.6px;top:35.6px;">Node symbol size</div>
<div class="dd" style="left:615.2px;top:45.8px;width:148.6px"><i></i></div>
<div class="t" style="left:617.8000000000001px;top:47.7px;">Country</div>
<div class="cb" style="left:617.8px;top:61.2px"><svg width="6.2" height="6.2" viewBox="0 0 7 7"><path d="M1.4 3.4L2.9 5.6L5.7 1" fill="none" stroke="#3048b0" stroke-width="1"/></svg></div>
<div class="t" style="left:627.9px;top:60.3px;">Show legend</div>
<div class="lb" style="left:616.2px;top:75px;width:146.8px;height:61.4px">
<div class="trk" style="left:3px;top:-4.2px;width:30.6px"></div>
<div class="knob" style="left:25.4px;top:-9.6px"></div>
<div class="trk" style="left:3px;top:10.0px;width:30.6px"></div>
<div class="knob" style="left:27px;top:4.6px"></div>
<div class="t" style="left:39.6px;top:5.4px">NO</div>
<div class="trk" style="left:3px;top:24.2px;width:30.6px"></div>
<div class="knob" style="left:28.8px;top:18.8px"></div>
<div class="t" style="left:39.6px;top:19.6px">SE</div>
<div class="trk" style="left:3px;top:38.4px;width:30.6px"></div>
<div class="knob" style="left:31.2px;top:33.0px"></div>
<div class="t" style="left:39.6px;top:33.8px">UK</div>
<div class="trk" style="left:3px;top:52.6px;width:30.6px"></div>
<div class="knob" style="left:32.4px;top:47.2px"></div>
<div class="t" style="left:39.6px;top:48.0px">USA</div>
<div class="sbv" style="left:136.6px;top:0;height:61.4px;background:#f4f4f4"></div>
<div class="au" style="left:139.4px;top:4.2px"></div>
<div class="thumbv" style="left:137px;top:37.2px;height:12.2px;background:linear-gradient(90deg,#f2f2f2,#e4e4e4 50%,#d8d8d8 62%,#e2e2e2);"></div><div class="grip" style="left:139.8px;top:41.6px;border-top-color:#8a8a8a;box-shadow:0 1.5px 0 #8a8a8a,0 3px 0 #8a8a8a;width:3.4px;"></div>
<div class="ad" style="left:139.4px;top:54.4px"></div>
</div>
<div class="tri-d" style="left:613.4px;top:144.2px"></div>
<div class="t" style="left:620.6px;top:141.1px;">Node color</div>
<div class="dd" style="left:615.2px;top:151.1px;width:148.6px"><i></i></div>
<div class="t" style="left:617.8000000000001px;top:153.0px;">Host</div>
<div class="cb" style="left:617.8px;top:166.6px"><svg width="6.2" height="6.2" viewBox="0 0 7 7"><path d="M1.4 3.4L2.9 5.6L5.7 1" fill="none" stroke="#3048b0" stroke-width="1"/></svg></div>
<div class="t" style="left:627.9px;top:165.9px;">Show legend</div>
<div class="lb" style="left:616.2px;top:180.2px;width:146.8px;height:60.6px">
<div class="sw" style="left:.4px;top:0.20px;width:15px;background:#000000"></div>
<div class="t" style="left:18.6px;top:-0.20px;font-style:italic;">Unknown</div>
<div class="sw" style="left:.4px;top:9.47px;width:15px;background:#dc3410"></div>
<div class="t" style="left:18.6px;top:9.07px;">Atlantic Herring</div>
<div class="sw" style="left:.4px;top:18.74px;width:15px;background:#1428dc"></div>
<div class="t" style="left:18.6px;top:18.34px;">Blue whiting</div>
<div class="sw" style="left:.4px;top:28.01px;width:15px;background:#58dc10"></div>
<div class="t" style="left:18.6px;top:27.61px;">Cod</div>
<div class="sw" style="left:.4px;top:37.28px;width:15px;background:#dc1496"></div>
<div class="t" style="left:18.6px;top:36.88px;">Coho salmon</div>
<div class="sw" style="left:.4px;top:46.55px;width:15px;background:#14dcdc"></div>
<div class="t" style="left:18.6px;top:46.15px;">Dab</div>
<div class="sw" style="left:.4px;top:55.82px;width:15px;background:#dc9a0c"></div>
<div class="t" style="left:18.6px;top:55.42px;">Eel</div>
<div class="sbv" style="left:136.6px;top:0;height:60.6px;background:#f4f4f4"></div>
<div class="au" style="left:139.4px;top:4.8px"></div>
<div class="thumbv" style="left:137px;top:11.1px;height:13.9px;background:linear-gradient(90deg,#f2f2f2,#e4e4e4 50%,#d8d8d8 62%,#e2e2e2);"></div><div class="grip" style="left:139.8px;top:16.4px;border-top-color:#8a8a8a;box-shadow:0 1.5px 0 #8a8a8a,0 3px 0 #8a8a8a;width:3.4px;"></div>
<div class="ad" style="left:139.4px;top:54.4px"></div>
</div>
<div class="tri-r" style="left:614.5px;top:248.60000000000002px"></div>
<div class="t" style="left:620.6px;top:246.6px;">Label text</div>
<div class="tri-r" style="left:614.5px;top:259.5px"></div>
<div class="t" style="left:620.6px;top:257.5px;">Label text color</div>
<div class="tri-r" style="left:614.5px;top:270.7px"></div>
<div class="t" style="left:620.6px;top:268.7px;">Label background color</div>
<div class="tri-r" style="left:614.5px;top:281.8px"></div>
<div class="t" style="left:620.6px;top:279.8px;">Branch color</div>
<div class="tri-d" style="left:613.4px;top:294.2px"></div>
<div class="t" style="left:620.6px;top:290.9px;">Metadata layers</div>
<div class="tri-d" style="left:616.4px;top:305.4px"></div>
<div class="t" style="left:623.6px;top:302.1px;">Metadata layer&nbsp; #1</div>
<div class="dd" style="left:618px;top:312.2px;width:146.8px"><i></i></div>
<div class="t" style="left:620.6px;top:314.1px;">Year</div>
<div class="cb" style="left:621px;top:328px"><svg width="6.2" height="6.2" viewBox="0 0 7 7"><path d="M1.4 3.4L2.9 5.6L5.7 1" fill="none" stroke="#3048b0" stroke-width="1"/></svg></div>
<div class="t" style="left:631.2px;top:327.3px;">Show legend</div>
<div class="cb" style="left:699.6px;top:328px"><svg width="6.2" height="6.2" viewBox="0 0 7 7"><path d="M1.4 3.4L2.9 5.6L5.7 1" fill="none" stroke="#3048b0" stroke-width="1"/></svg></div>
<div class="t" style="left:709.3px;top:327.3px;">Show layer names</div>
<div class="t" style="left:618px;top:342.1px;">Layer thickness</div>
<div class="trk" style="left:692px;top:346.4px;width:70.6px"></div>
<div class="knob" style="left:692.4px;top:341.6px;height:9.4px"></div>
<div class="lb" style="left:618px;top:359.2px;width:147px;height:60.2px">
<div class="sw" style="left:.6px;top:-4.60px;width:14.4px;background:#14dcd2"></div>
<div class="t" style="left:19px;top:-5.00px">1995</div>
<div class="sw" style="left:.6px;top:4.67px;width:14.4px;background:#dc960c"></div>
<div class="t" style="left:19px;top:4.27px">1996</div>
<div class="sw" style="left:.6px;top:13.94px;width:14.4px;background:#5014dc"></div>
<div class="t" style="left:19px;top:13.54px">1997</div>
<div class="sw" style="left:.6px;top:23.21px;width:14.4px;background:#14dc28"></div>
<div class="t" style="left:19px;top:22.81px">1998</div>
<div class="sw" style="left:.6px;top:32.48px;width:14.4px;background:#dc1446"></div>
<div class="t" style="left:19px;top:32.08px">1999</div>
<div class="sw" style="left:.6px;top:41.75px;width:14.4px;background:#1478dc"></div>
<div class="t" style="left:19px;top:41.35px">2000</div>
<div class="sw" style="left:.6px;top:51.02px;width:14.4px;background:#b4dc0c"></div>
<div class="t" style="left:19px;top:50.62px">2006</div>
<div class="sbv" style="left:136.8px;top:0;height:60.2px;background:#f4f4f4"></div>
<div class="au" style="left:139.4px;top:4.6px"></div>
<div class="thumbv" style="left:137.2px;top:37.1px;height:11.5px;background:linear-gradient(90deg,#f2f2f2,#e4e4e4 50%,#d8d8d8 62%,#e2e2e2);"></div><div class="grip" style="left:140px;top:41.2px;border-top-color:#8a8a8a;box-shadow:0 1.5px 0 #8a8a8a,0 3px 0 #8a8a8a;width:3.4px;"></div>
<div class="ad" style="left:139.4px;top:54.2px"></div>
</div>
<div class="tri-d" style="left:616.4px;top:428.2px"></div>
<div class="t" style="left:623.6px;top:424.9px;">Metadata layer&nbsp; #2</div>
<div class="dd" style="left:618px;top:435.1px;width:146.8px"><i></i></div>
<div class="t" style="left:620.6px;top:437.0px;">Host</div>
<div class="a" style="left:612.4px;top:449.6px;width:172px;height:2.6px;overflow:hidden"><div class="cb" style="left:9.2px;top:.6px"></div><div class="cb" style="left:87px;top:.6px"></div><div class="t" style="left:19.6px;top:1px">Show legend</div><div class="t" style="left:97px;top:1px">Show layer names</div></div>
<div class="sbv" style="left:785.2px;top:26px;height:425.6px;width:12.2px;background:#f1f1f1;border-left:.8px solid #d6d6d6;border-right:.8px solid #dedede;box-sizing:border-box"></div>
<div class="au" style="left:789.4px;top:31.4px"></div>
<div class="thumbv" style="left:787px;top:186px;height:195.2px;width:9.4px"></div><div class="grip" style="left:789.8px;top:283px"></div>
<div class="ad" style="left:789.4px;top:445px"></div>
<div class="a" style="left:612.2px;top:452.2px;width:186px;height:11.8px;background:#f0f0f0"></div>
<div class="a" style="left:613.6px;top:456.4px;width:6.2px;height:1.5px;background:#a0a0a0"></div>
<svg class="a" style="left:623px;top:453.6px" width="9" height="8" viewBox="0 0 9 8"><path d="M.5 7.5V1.2H3.4L4.2 2.2H8.5V7.5Z" fill="#fbfbfb" stroke="#8a8a8a" stroke-width=".8"/></svg>
<svg class="a" style="left:635px;top:453.6px" width="7" height="8" viewBox="0 0 7 8"><path d="M3.5 .5V7.5M.5 2.5H6.5M.5 5.5H6.5" fill="none" stroke="#c4c4c4" stroke-width=".9"/></svg>
<div class="t" style="left:779.4px;top:452.7px;color:#909090;-webkit-text-stroke-color:#909090;font-size:8.8px">?</div>
<svg class="a" style="left:788.4px;top:454.4px" width="7" height="7" viewBox="0 0 7 7"><path d="M2.4 .8H6.6M2.4 2.4H6.6M2.4 4H6.6" stroke="#b4b4b4" stroke-width=".9"/><path d="M.8 .2V5.6" stroke="#555" stroke-width=".9" stroke-dasharray="1 .8"/><path d="M4 5L5.2 6.4L6.4 5Z" fill="#888"/></svg>
</body></html>
